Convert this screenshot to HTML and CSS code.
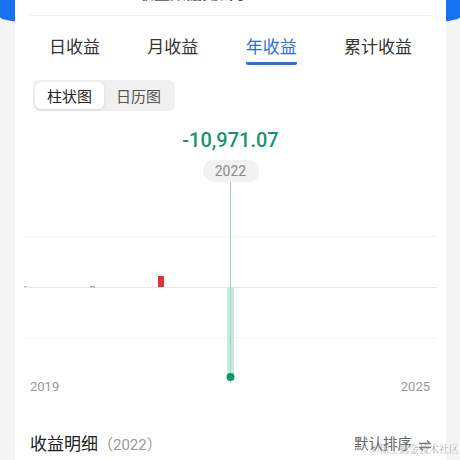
FILE: index.html
```html
<html>
<head>
    <title>年收益</title>
    <link rel="stylesheet" href="styles.css">
</head>
<body>
    <div class="hero"></div>
    <div class="card">
        <div class="summary">收益数据更新于 06-28 </div>

        <div class="tabs">
            <div class="tab">日收益</div>
            <div class="tab">月收益</div>
            <div class="tab active">年收益</div>
            <div class="tab">累计收益</div>
        </div>

        <div class="switch">
            <button class="on">柱状图</button>
            <button>日历图</button>
        </div>

        <div class="value">-10,971.07</div>
        <div class="year-pill">2022</div>

        <svg class="chart" width="431" height="196" viewBox="0 0 431 196">
            <!-- grid -->
            <line x1="9" y1="54.5" x2="422" y2="54.5" stroke="#f3f3f3" />
            <line x1="9" y1="105.5" x2="422" y2="105.5" stroke="#e6e6e6" />
            <line x1="9" y1="155.5" x2="422" y2="155.5" stroke="#f3f3f3" />
            <!-- bars -->
            <rect x="9" y="104" width="3" height="1" fill="#b9b9b9" />
            <rect x="75" y="104" width="5" height="1.5" fill="#a9b5b0" />
            <rect x="143" y="94" width="6" height="11" fill="#e1303c" />
            <rect x="212" y="105" width="7" height="88" fill="#c6ebdf" />
            <!-- cursor -->
            <line x1="215.5" y1="0" x2="215.5" y2="201" stroke="#a6cfc3" />
            <circle cx="215.5" cy="195" r="4" fill="#12936c" />
        </svg>

        <div class="axis">
            <span>2019</span>
            <span>2025</span>
        </div>

        <div class="detail">
            <div class="detail-title">收益明细<span class="detail-year">（2022）</span></div>
            <div class="sort">默认排序
                <svg width="14" height="12" viewBox="0 0 14 12">
                    <path d="M1 4.5h11L9 1.5" fill="none" stroke="#777" stroke-width="1.3" />
                    <path d="M13 8.5H2l3 3" fill="none" stroke="#777" stroke-width="1.3" />
                </svg>
            </div>
            <div class="watermark">@稀土掘金技术社区</div>
        </div>
    </div>
</body>
</html>
```

FILE: styles.css
```css
body {
    margin: 0;
    background-color: #f5f5f5;
    font-family: Roboto, "Noto Sans CJK SC", sans-serif;
    color: #222;
    overflow: hidden;
}

.hero {
    height: 30px;
    background-color: #1672f3;
    border-radius: 0 0 50% 50% / 0 0 13px 13px;
}

.card {
    margin: -65px 14px 0 15px;
    background: #fff;
    border-radius: 10px;
    height: 540px;
}

.summary {
    height: 37px;
    margin: 0 15px;
    padding: 0 26px 13px 0;
    border-bottom: 1px solid #f1f1f1;
    display: flex;
    justify-content: center;
    align-items: flex-end;
    font-size: 16px;
    font-weight: bold;
    line-height: 16px;
    color: #555;
}

.tabs {
    display: flex;
    justify-content: space-between;
    padding: 19px 34px 0;
}

.tab {
    font-size: 17px;
    line-height: 24px;
    color: #333;
    padding-bottom: 6px;
}

.tab.active {
    color: #2a6fdb;
    border-bottom: 3px solid #2a6fdb;
    padding-bottom: 3px;
    border-radius: 0 0 2px 2px;
}

.switch {
    display: inline-flex;
    margin: 15px 0 0 18px;
    padding: 2px;
    background-color: #f0f0f0;
    border-radius: 7px;
}

.switch button {
    height: 27px;
    padding: 0 12px;
    font-family: "Noto Sans CJK SC", sans-serif;
    font-size: 15px;
    color: #555;
    border: none;
    border-radius: 6px;
    background: none;
}

.switch button.on {
    color: #222;
    background-color: #fff;
    box-shadow: 0 1px 3px rgba(0, 0, 0, 0.12);
}

.value {
    margin-top: 15px;
    text-align: center;
    font-size: 20px;
    font-weight: 500;
    line-height: 28px;
    color: #1a9271;
}

.year-pill {
    width: 56px;
    height: 22px;
    margin: 6px auto 0;
    border-radius: 11px;
    background-color: #f2f2f2;
    text-align: center;
    font-size: 14px;
    line-height: 22px;
    color: #8a8a8a;
}

.chart {
    display: block;
    overflow: visible;
}

.axis {
    display: flex;
    justify-content: space-between;
    padding: 0 16px 0 15px;
    font-size: 13px;
    line-height: 18px;
    color: #999;
}

.detail {
    position: relative;
    display: flex;
    justify-content: space-between;
    align-items: center;
    margin-top: 36px;
    padding: 0 14px 0 15px;
    line-height: 24px;
}

.detail-title {
    font-size: 17px;
    color: #222;
}

.detail-year {
    font-size: 15px;
    color: #999;
}

.sort {
    display: flex;
    align-items: center;
    gap: 6px;
    font-size: 14.5px;
    color: #666;
}

.watermark {
    position: absolute;
    left: 355px;
    top: 11px;
    font-family: "Noto Serif CJK SC", "Noto Sans CJK SC", serif;
    font-size: 10px;
    line-height: 12px;
    color: rgba(150, 150, 150, 0.8);
    white-space: nowrap;
}
```
